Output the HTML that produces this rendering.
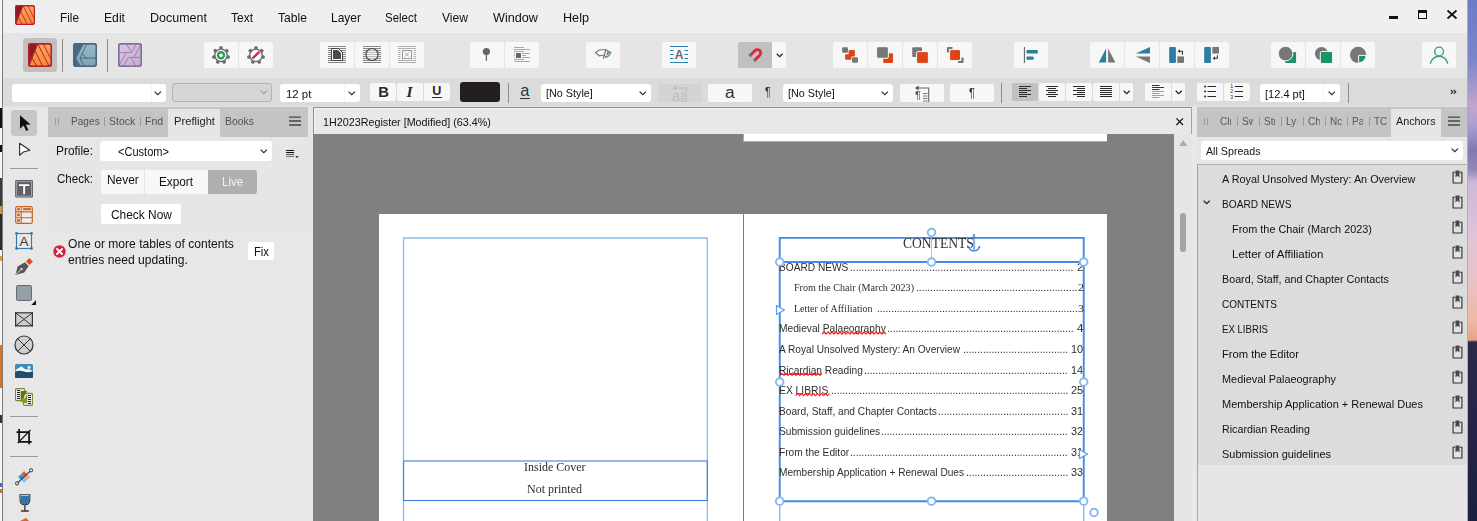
<!DOCTYPE html>
<html lang="en"><head><meta charset="utf-8"><title>1H2023Register - Affinity Publisher</title>
<style>
html,body{margin:0;padding:0;}
body{width:1477px;height:521px;overflow:hidden;background:#e6e6e6;font-family:"Liberation Sans",Arial,sans-serif;}
#app{position:relative;width:1477px;height:521px;overflow:hidden;}
#app div,#app span,#app svg{position:absolute;display:block;}
#app span{white-space:pre;}
</style></head><body><div id="app"><section id="desktop">
</section><section id="backgrounds" aria-label="backgrounds">
<div style="left:1467px;top:0px;width:10px;height:521px;background:linear-gradient(180deg,#6c7cc6 0px,#7a86c8 60px,#a898cc 88px,#c2a4cc 106px,#aaa0d4 125px,#8278b0 150px,#9388b8 170px,#cdb8d8 182px,#e0c4d8 240px,#e8c2c6 280px,#efb8a4 320px,#e6a488 340px,#2c2848 342px,#26264a 400px,#1c1f40 521px);"></div>
<div style="left:0px;top:0px;width:3px;height:521px;background:#f6f6f6;"></div>
<div style="left:0px;top:108px;width:2px;height:20px;background:#111;"></div>
<div style="left:0px;top:145px;width:2px;height:7px;background:#111;"></div>
<div style="left:0px;top:178px;width:2px;height:28px;background:#3a3a3a;"></div>
<div style="left:0px;top:206px;width:2px;height:8px;background:#d9962e;"></div>
<div style="left:0px;top:214px;width:2px;height:36px;background:#2a2a2a;"></div>
<div style="left:0px;top:256px;width:2px;height:5px;background:#e0a030;"></div>
<div style="left:0px;top:345px;width:2px;height:43px;background:#e0701e;"></div>
<div style="left:0px;top:415px;width:2px;height:8px;background:#333;"></div>
<div style="left:0px;top:483px;width:2px;height:4px;background:#3a6fd0;"></div>
<div style="left:0px;top:489px;width:2px;height:4px;background:#e0701e;"></div>
<div style="left:2px;top:0px;width:1px;height:521px;background:#7a7a7a;"></div>
<div style="left:3px;top:0px;width:1464px;height:33px;background:#efefef;"></div>
<div style="left:3px;top:33px;width:1464px;height:45px;background:#e5e5e5;"></div>
<div style="left:3px;top:78px;width:1464px;height:29px;background:#dbdbdb;"></div>
<div style="left:3px;top:107px;width:1464px;height:414px;background:#e6e6e6;"></div>
<div style="left:1466.6px;top:0px;width:1.2000000000000455px;height:521px;background:#aeaeb4;"></div>
</section><section id="menu-bar" aria-label="menu bar">
<svg style="left:15px;top:5px;" width="20" height="20" viewBox="0 0 24 24"><defs><clipPath id="pmc"><rect width="24" height="24" rx="3.200"/></clipPath>
<linearGradient id="pmg" x1="0" y1="0" x2="0" y2="1"><stop offset="0" stop-color="#ffa45c"/><stop offset="1" stop-color="#f6893c"/></linearGradient></defs>
<g clip-path="url(#pmc)"><rect width="24" height="24" fill="#b4202d"/>
<polygon points="0,0 9.800,0 0,20.500" fill="#8c1a25"/>
<polygon points="1.600,22.800 10,1.400 22.800,1.400 22.800,22.800" fill="url(#pmg)"/>
<g stroke="#b4202d" stroke-width="1"><line x1="6.900" y1="7.300" x2="14.400" y2="23"/><line x1="9.800" y1="1" x2="21" y2="23"/><line x1="15.300" y1="1" x2="23.200" y2="16.500"/><line x1="3.900" y1="14.600" x2="8.500" y2="23"/></g>
</g><rect x="0.700" y="0.700" width="22.600" height="22.600" rx="2.700" fill="none" stroke="#b4202d" stroke-width="1.500"/></svg>
<span style="left:59.50px;top:12.00px;font-size:12.2px;line-height:12.2px;color:#111;transform:scaleX(0.9665);transform-origin:0 0;">File</span>
<span style="left:103.50px;top:12.00px;font-size:12.2px;line-height:12.2px;color:#111;transform:scaleX(0.9989);transform-origin:0 0;">Edit</span>
<span style="left:149.50px;top:12.00px;font-size:12.2px;line-height:12.2px;color:#111;transform:scaleX(1.0251);transform-origin:0 0;">Document</span>
<span style="left:230.50px;top:12.00px;font-size:12.2px;line-height:12.2px;color:#111;transform:scaleX(0.9833);transform-origin:0 0;">Text</span>
<span style="left:277.50px;top:12.00px;font-size:12.2px;line-height:12.2px;color:#111;transform:scaleX(0.9943);transform-origin:0 0;">Table</span>
<span style="left:330.50px;top:12.00px;font-size:12.2px;line-height:12.2px;color:#111;transform:scaleX(0.9830);transform-origin:0 0;">Layer</span>
<span style="left:384.50px;top:12.00px;font-size:12.2px;line-height:12.2px;color:#111;transform:scaleX(0.9437);transform-origin:0 0;">Select</span>
<span style="left:441.50px;top:12.00px;font-size:12.2px;line-height:12.2px;color:#111;transform:scaleX(0.9915);transform-origin:0 0;">View</span>
<span style="left:492.50px;top:12.00px;font-size:12.2px;line-height:12.2px;color:#111;transform:scaleX(1.0371);transform-origin:0 0;">Window</span>
<span style="left:562.50px;top:12.00px;font-size:12.2px;line-height:12.2px;color:#111;transform:scaleX(1.0362);transform-origin:0 0;">Help</span>
<div style="left:1389px;top:16px;width:9px;height:3px;background:#111;"></div>
<div style="left:1418px;top:10px;width:9px;height:9px;background:transparent;box-sizing:border-box;border:1px solid #111;border-top:3px solid #111;"></div>
<svg style="left:1446px;top:9px;" width="12" height="11" viewBox="0 0 12 11"><path d="M1.5 1.5 L10.5 9.5 M10.5 1.5 L1.5 9.5" stroke="#111" stroke-width="1.7" fill="none"/></svg>
</section><section id="toolbar" aria-label="toolbar">
<div style="left:23px;top:38px;width:34px;height:34px;background:#c0c0c0;border-radius:3px;"></div>
<svg style="left:28px;top:43px;" width="24" height="24" viewBox="0 0 24 24"><defs><clipPath id="ptc"><rect width="24" height="24" rx="3.200"/></clipPath>
<linearGradient id="ptg" x1="0" y1="0" x2="0" y2="1"><stop offset="0" stop-color="#ffa45c"/><stop offset="1" stop-color="#f6893c"/></linearGradient></defs>
<g clip-path="url(#ptc)"><rect width="24" height="24" fill="#b4202d"/>
<polygon points="0,0 9.800,0 0,20.500" fill="#8c1a25"/>
<polygon points="1.600,22.800 10,1.400 22.800,1.400 22.800,22.800" fill="url(#ptg)"/>
<g stroke="#b4202d" stroke-width="1"><line x1="6.900" y1="7.300" x2="14.400" y2="23"/><line x1="9.800" y1="1" x2="21" y2="23"/><line x1="15.300" y1="1" x2="23.200" y2="16.500"/><line x1="3.900" y1="14.600" x2="8.500" y2="23"/></g>
</g><rect x="0.700" y="0.700" width="22.600" height="22.600" rx="2.700" fill="none" stroke="#b4202d" stroke-width="1.500"/></svg>
<div style="left:62px;top:39px;width:1px;height:32.5px;background:#8a8a8a;"></div>
<svg style="left:73px;top:43px;" width="24" height="24" viewBox="0 0 24 24">
<defs><clipPath id="pc3"><rect width="24" height="24" rx="3.200"/></clipPath>
<linearGradient id="dg" x1="0" y1="0" x2="0" y2="1"><stop offset="0" stop-color="#97b9c7"/><stop offset="1" stop-color="#7ea5b6"/></linearGradient></defs>
<g clip-path="url(#pc3)"><rect width="24" height="24" fill="#4d6680"/>
<polygon points="10.600,1.400 22.800,1.400 22.800,22.800 7.600,22.800 3.200,15.200" fill="url(#dg)"/>
<g stroke="#4d6680" stroke-width="1" fill="none"><path d="M13.900 1 L6.900 15.100 H23"/><path d="M9.200 10.200 L13.400 15.100"/><path d="M6.900 15.100 L11 23"/></g>
</g><rect x="0.700" y="0.700" width="22.600" height="22.600" rx="2.700" fill="none" stroke="#4d6680" stroke-width="1.500"/>
</svg>
<div style="left:107px;top:39px;width:1px;height:32.5px;background:#8a8a8a;"></div>
<svg style="left:118px;top:43px;" width="24" height="24" viewBox="0 0 24 24">
<defs><clipPath id="pc4"><rect width="24" height="24" rx="3.200"/></clipPath>
<linearGradient id="pg" x1="0" y1="0" x2="1" y2="1"><stop offset="0" stop-color="#dcc6e2"/><stop offset="1" stop-color="#c5a8d0"/></linearGradient></defs>
<g clip-path="url(#pc4)"><rect width="24" height="24" fill="#806f96"/>
<rect x="1.400" y="1.400" width="21.400" height="21.400" fill="url(#pg)"/>
<g stroke="#9a84ad" stroke-width="1" fill="none">
<path d="M8.500 1 L13.500 9.600"/><path d="M23 2 L15.800 14.200"/><path d="M1 9.600 L13.500 9.600"/><path d="M8.200 9.600 L1.500 21.500"/><path d="M23 14.400 L10.500 14.400"/><path d="M13 14.400 L17.800 23"/><path d="M10.500 14.400 L5.500 23"/><path d="M13.500 9.600 L18 1.500"/>
</g></g><rect x="0.700" y="0.700" width="22.600" height="22.600" rx="2.700" fill="none" stroke="#806f96" stroke-width="1.500"/>
</svg>
<div style="left:204px;top:42px;width:34px;height:26px;background:#f7f7f7;border-radius:2px;"></div>
<svg style="left:204px;top:42px;" width="34" height="26" viewBox="0 0 34 26"><rect x="15.30" y="4.30" width="3.4" height="3.6" rx="1.1" fill="#6c6c6c" transform="rotate(0.00 17 13.3)"/><rect x="15.30" y="4.30" width="3.4" height="3.6" rx="1.1" fill="#6c6c6c" transform="rotate(51.43 17 13.3)"/><rect x="15.30" y="4.30" width="3.4" height="3.6" rx="1.1" fill="#6c6c6c" transform="rotate(102.86 17 13.3)"/><rect x="15.30" y="4.30" width="3.4" height="3.6" rx="1.1" fill="#6c6c6c" transform="rotate(154.29 17 13.3)"/><rect x="15.30" y="4.30" width="3.4" height="3.6" rx="1.1" fill="#6c6c6c" transform="rotate(205.71 17 13.3)"/><rect x="15.30" y="4.30" width="3.4" height="3.6" rx="1.1" fill="#6c6c6c" transform="rotate(257.14 17 13.3)"/><rect x="15.30" y="4.30" width="3.4" height="3.6" rx="1.1" fill="#6c6c6c" transform="rotate(308.57 17 13.3)"/><circle cx="17" cy="13.3" r="6.2" fill="#fff" stroke="#6c6c6c" stroke-width="1.4"/><circle cx="17" cy="13.3" r="3.05" fill="none" stroke="#22a04b" stroke-width="2.3"/></svg>
<div style="left:239px;top:42px;width:34px;height:26px;background:#f7f7f7;border-radius:2px;"></div>
<svg style="left:239px;top:42px;" width="34" height="26" viewBox="0 0 34 26"><rect x="15.30" y="4.30" width="3.4" height="3.6" rx="1.1" fill="#6c6c6c" transform="rotate(0.00 17 13.3)"/><rect x="15.30" y="4.30" width="3.4" height="3.6" rx="1.1" fill="#6c6c6c" transform="rotate(51.43 17 13.3)"/><rect x="15.30" y="4.30" width="3.4" height="3.6" rx="1.1" fill="#6c6c6c" transform="rotate(102.86 17 13.3)"/><rect x="15.30" y="4.30" width="3.4" height="3.6" rx="1.1" fill="#6c6c6c" transform="rotate(154.29 17 13.3)"/><rect x="15.30" y="4.30" width="3.4" height="3.6" rx="1.1" fill="#6c6c6c" transform="rotate(205.71 17 13.3)"/><rect x="15.30" y="4.30" width="3.4" height="3.6" rx="1.1" fill="#6c6c6c" transform="rotate(257.14 17 13.3)"/><rect x="15.30" y="4.30" width="3.4" height="3.6" rx="1.1" fill="#6c6c6c" transform="rotate(308.57 17 13.3)"/><circle cx="17" cy="13.3" r="6.2" fill="#fff" stroke="#6c6c6c" stroke-width="1.4"/><path d="M13.6 16.3 L20.3 9.9" stroke="#e0203a" stroke-width="2.4"/></svg>
<div style="left:320px;top:42px;width:34px;height:26px;background:#f7f7f7;border-radius:2px;"></div>
<svg style="left:320px;top:42px;" width="34" height="26" viewBox="0 0 34 26"><path d="M8 4.5 H26" stroke="#888" stroke-width="1"/><path d="M8 6.5 H26" stroke="#888" stroke-width="1"/><path d="M8 8.5 H26" stroke="#888" stroke-width="1"/><path d="M8 10.5 H26" stroke="#888" stroke-width="1"/><path d="M8 12.5 H26" stroke="#888" stroke-width="1"/><path d="M8 14.5 H26" stroke="#888" stroke-width="1"/><path d="M8 16.5 H26" stroke="#888" stroke-width="1"/><path d="M8 18.5 H26" stroke="#888" stroke-width="1"/><path d="M8 20.5 H26" stroke="#888" stroke-width="1"/><path d="M11.5 6.5 H18.5 L22.5 10.5 V18.5 H11.5 Z" fill="#fff" stroke="#444" stroke-width="1"/><path d="M13 8 H17.900 L21 11.100 V17 H13 Z" fill="#4a4a4a"/></svg>
<div style="left:355px;top:42px;width:34px;height:26px;background:#f7f7f7;border-radius:2px;"></div>
<svg style="left:355px;top:42px;" width="34" height="26" viewBox="0 0 34 26"><path d="M8 4.5 H26" stroke="#888" stroke-width="1"/><path d="M8 6.5 H26" stroke="#888" stroke-width="1"/><path d="M8 8.5 H26" stroke="#888" stroke-width="1"/><path d="M8 10.5 H26" stroke="#888" stroke-width="1"/><path d="M8 12.5 H26" stroke="#888" stroke-width="1"/><path d="M8 14.5 H26" stroke="#888" stroke-width="1"/><path d="M8 16.5 H26" stroke="#888" stroke-width="1"/><path d="M8 18.5 H26" stroke="#888" stroke-width="1"/><path d="M8 20.5 H26" stroke="#888" stroke-width="1"/><circle cx="17" cy="12.500" r="6" fill="rgba(247,247,247,0.45)" stroke="#4a4a4a" stroke-width="1.200"/></svg>
<div style="left:390px;top:42px;width:34px;height:26px;background:#f7f7f7;border-radius:2px;"></div>
<svg style="left:390px;top:42px;" width="34" height="26" viewBox="0 0 34 26"><path d="M8 4.5 H26" stroke="#b0b0b0" stroke-width="1"/><path d="M8 6.5 H26" stroke="#b0b0b0" stroke-width="1"/><path d="M8 8.5 H10.5 M23.5 8.5 H26" stroke="#b0b0b0" stroke-width="1"/><path d="M8 10.5 H10.5 M23.5 10.5 H26" stroke="#b0b0b0" stroke-width="1"/><path d="M8 12.5 H10.5 M23.5 12.5 H26" stroke="#b0b0b0" stroke-width="1"/><path d="M8 14.5 H10.5 M23.5 14.5 H26" stroke="#b0b0b0" stroke-width="1"/><path d="M8 16.5 H10.5 M23.5 16.5 H26" stroke="#b0b0b0" stroke-width="1"/><path d="M8 18.5 H26" stroke="#b0b0b0" stroke-width="1"/><path d="M8 20.5 H26" stroke="#b0b0b0" stroke-width="1"/><rect x="12.500" y="8.500" width="9" height="8" fill="none" stroke="#999" stroke-width="1"/><path d="M15 10.500 L19 14.500 M19 10.500 L15 14.500" stroke="#a5a5a5" stroke-width="1"/></svg>
<div style="left:470px;top:42px;width:34px;height:26px;background:#f7f7f7;border-radius:2px;"></div>
<svg style="left:470px;top:42px;" width="34" height="26" viewBox="0 0 34 26"><circle cx="16.400" cy="9.500" r="3.600" fill="#666"/><path d="M16.400 12 V18.800" stroke="#666" stroke-width="1.300"/></svg>
<div style="left:505px;top:42px;width:34px;height:26px;background:#f7f7f7;border-radius:2px;"></div>
<svg style="left:505px;top:42px;" width="34" height="26" viewBox="0 0 34 26"><g stroke="#a8a8a8" stroke-width="1"><path d="M9 5.500 H19 M9 7.500 H25 M9 9.500 H19 M9 11.500 H10 M17 11.500 H25 M9 13.500 H10 M17 13.500 H21 M9 15.500 H10 M17 15.500 H25 M9 17.500 H19 M9 19.500 H25"/></g><rect x="11" y="11" width="5" height="5" fill="#666"/></svg>
<div style="left:586px;top:42px;width:34px;height:26px;background:#f7f7f7;border-radius:2px;"></div>
<svg style="left:586px;top:42px;" width="34" height="26" viewBox="0 0 34 26"><path d="M9.500 10.500 Q16 4.500 25 10.500 Q23.500 13.500 20.500 15.500 L18.500 13.800 Q16 12.500 13.500 14 Z" fill="none" stroke="#777" stroke-width="1.100" stroke-linejoin="round"/><path d="M20 7 L17.300 16.800" stroke="#777" stroke-width="1.200"/><path d="M21.300 8.800 L24 10.800 L20.300 14.200 Z" fill="#3f9bd0"/></svg>
<div style="left:662px;top:42px;width:34px;height:26px;background:#f7f7f7;border-radius:2px;"></div>
<svg style="left:662px;top:42px;" width="34" height="26" viewBox="0 0 34 26"><g stroke="#2d7fb0" stroke-width="1.100"><path d="M8 4.500 H26 M8 8.500 H11.500 M22.500 8.500 H26 M8 12.500 H11.500 M22.500 12.500 H26 M8 16.500 H11.500 M22.500 16.500 H26 M8 20.500 H26"/></g></svg>
<span style="left:674.70px;top:49.00px;font-size:12px;line-height:12px;color:#6a6a6a;font-weight:bold;">A</span>
<div style="left:738px;top:42px;width:34px;height:26px;background:#c0c0c0;border-radius:2px;"></div>
<svg style="left:738px;top:42px;" width="34" height="26" viewBox="0 0 34 26"><g transform="translate(19.400 10.900) rotate(45)"><path d="M-3.300 7.800 V0 A3.300 3.300 0 0 1 3.300 0 V7.800" fill="none" stroke="#e4243f" stroke-width="2.900"/><path d="M-3.300 5.600 V8 M3.300 5.600 V8" stroke="#707070" stroke-width="2.900"/></g></svg>
<div style="left:772px;top:42px;width:14px;height:26px;background:#f7f7f7;border-radius:0 2px 2px 0;"></div>
<svg style="left:776.3px;top:52.5px;" width="8" height="5" viewBox="0 0 8 5"><path d="M0.700 0.700 L3.700 3.700 L6.700 0.700" fill="none" stroke="#222" stroke-width="1.250"/></svg>
<div style="left:833px;top:42px;width:34px;height:26px;background:#f7f7f7;border-radius:2px;"></div>
<svg style="left:833px;top:42px;" width="34" height="26" viewBox="0 0 34 26"><rect x="9.100" y="5.200" width="5.900" height="5.500" rx="1" fill="#777"/><rect x="19" y="15.300" width="6" height="5.500" rx="1" fill="#777"/><rect x="15.600" y="8.100" width="6.300" height="6.300" rx="1" fill="#dc4416"/><rect x="12.100" y="12.200" width="6.300" height="5.600" rx="1" fill="#dc4416"/></svg>
<div style="left:868px;top:42px;width:34px;height:26px;background:#f7f7f7;border-radius:2px;"></div>
<svg style="left:868px;top:42px;" width="34" height="26" viewBox="0 0 34 26"><rect x="15.200" y="11.200" width="9.800" height="9.700" rx="1" fill="#dc4416"/><rect x="8.600" y="4.700" width="11.800" height="11.600" rx="1.500" fill="#777" stroke="#f7f7f7" stroke-width="1"/></svg>
<div style="left:903px;top:42px;width:34px;height:26px;background:#f7f7f7;border-radius:2px;"></div>
<svg style="left:903px;top:42px;" width="34" height="26" viewBox="0 0 34 26"><rect x="9.200" y="5.200" width="9.800" height="9.800" rx="1" fill="#777"/><rect x="13.500" y="9.600" width="11.900" height="11.800" rx="1.500" fill="#dc4416" stroke="#f7f7f7" stroke-width="1"/></svg>
<div style="left:938px;top:42px;width:34px;height:26px;background:#f7f7f7;border-radius:2px;"></div>
<svg style="left:938px;top:42px;" width="34" height="26" viewBox="0 0 34 26"><path d="M10 10.500 V6 H14.500 M20 20 H24.500 V15.500" fill="none" stroke="#777" stroke-width="2.200" stroke-linejoin="round"/><rect x="11.600" y="7.600" width="10.900" height="10.900" rx="1.500" fill="#dc4416" stroke="#f7f7f7" stroke-width="1"/></svg>
<div style="left:1014px;top:42px;width:34px;height:26px;background:#f7f7f7;border-radius:2px;"></div>
<svg style="left:1014px;top:42px;" width="34" height="26" viewBox="0 0 34 26"><path d="M10.400 5 V21" stroke="#5a5a5a" stroke-width="1"/><rect x="12.400" y="8.100" width="11.500" height="3.500" rx="1" fill="#2b7ea1"/><rect x="12.400" y="14.400" width="7.300" height="3.400" rx="1" fill="#2b7ea1"/></svg>
<div style="left:1090px;top:42px;width:34px;height:26px;background:#f7f7f7;border-radius:2px;"></div>
<svg style="left:1090px;top:42px;" width="34" height="26" viewBox="0 0 34 26"><polygon points="16.100,6.600 16.100,20.600 8.800,20.600" fill="#2b7ea1"/><polygon points="18.100,6.600 18.100,20.600 25.400,20.600" fill="#777"/></svg>
<div style="left:1125px;top:42px;width:34px;height:26px;background:#f7f7f7;border-radius:2px;"></div>
<svg style="left:1125px;top:42px;" width="34" height="26" viewBox="0 0 34 26"><polygon points="25,5 25,11.600 10.700,11.600" fill="#2b7ea1"/><polygon points="10.700,14.400 25,14.400 25,20.900" fill="#777"/></svg>
<div style="left:1160px;top:42px;width:34px;height:26px;background:#f7f7f7;border-radius:2px;"></div>
<svg style="left:1160px;top:42px;" width="34" height="26" viewBox="0 0 34 26"><rect x="9.200" y="5" width="6.700" height="15.900" rx="1" fill="#2b7ea1"/><rect x="17.300" y="14.400" width="6.700" height="6.500" fill="#777"/><path d="M19.500 9.200 H22.400 V12.800" fill="none" stroke="#333" stroke-width="1.100"/><path d="M17.600 9.200 L20 7.300 V11.100 Z" fill="#333"/></svg>
<div style="left:1195px;top:42px;width:34px;height:26px;background:#f7f7f7;border-radius:2px;"></div>
<svg style="left:1195px;top:42px;" width="34" height="26" viewBox="0 0 34 26"><rect x="9.200" y="5" width="6.700" height="15.900" rx="1" fill="#2b7ea1"/><rect x="17.300" y="5" width="6.700" height="6.600" fill="#777"/><path d="M22.400 13.200 V16.200 H19.500" fill="none" stroke="#333" stroke-width="1.100"/><path d="M17.600 16.200 L20 14.300 V18.100 Z" fill="#333"/></svg>
<div style="left:1271px;top:42px;width:34px;height:26px;background:#f7f7f7;border-radius:2px;"></div>
<svg style="left:1271px;top:42px;" width="34" height="26" viewBox="0 0 34 26"><rect x="14" y="9.900" width="11.100" height="11.100" rx="1" fill="#1a9563"/><circle cx="14.600" cy="11.600" r="7.300" fill="#777" stroke="#f7f7f7" stroke-width="1"/></svg>
<div style="left:1306px;top:42px;width:34px;height:26px;background:#f7f7f7;border-radius:2px;"></div>
<svg style="left:1306px;top:42px;" width="34" height="26" viewBox="0 0 34 26"><circle cx="15.500" cy="11.600" r="6.600" fill="#777"/><rect x="14.300" y="9.400" width="12.300" height="12.100" rx="1.500" fill="#1a9563" stroke="#f7f7f7" stroke-width="1"/></svg>
<div style="left:1341px;top:42px;width:34px;height:26px;background:#f7f7f7;border-radius:2px;"></div>
<svg style="left:1341px;top:42px;" width="34" height="26" viewBox="0 0 34 26"><circle cx="17.100" cy="12.900" r="8.100" fill="#777"/><path d="M17.600 13.400 H25.180 A8.100 8.100 0 0 1 17.600 20.980 Z" fill="#1a9563" stroke="#f7f7f7" stroke-width="1"/><path d="M17.100 21 A8.100 8.100 0 0 0 25.200 12.900" fill="none" stroke="#777" stroke-width="0"/></svg>
<div style="left:1422px;top:42px;width:34px;height:26px;background:#f7f7f7;border-radius:2px;"></div>
<svg style="left:1422px;top:42px;" width="34" height="26" viewBox="0 0 34 26"><circle cx="17.050" cy="9.500" r="4.400" fill="none" stroke="#35a777" stroke-width="1.400"/><path d="M8.300 21.700 Q10.500 14.300 17.050 14.300 Q23.600 14.300 25.800 21.700" fill="none" stroke="#35a777" stroke-width="1.400"/></svg>
</section><section id="context-toolbar" aria-label="context toolbar">
<div style="left:12px;top:83.5px;width:154px;height:18.5px;background:#fff;border-radius:3px;"></div><svg style="left:154px;top:90.5px;" width="8" height="5.5" viewBox="0 0 8 5.5"><path d="M0.600 0.600 L3.800 3.700 L7 0.600" fill="none" stroke="#262626" stroke-width="1.100"/></svg>
<div style="left:151px;top:84px;width:1px;height:18px;background:#f3f3f3;"></div>
<div style="left:172px;top:83px;width:100px;height:19px;background:#d6d6d6;border-radius:3px;box-sizing:border-box;border:1px solid #b4b4b4;"></div><svg style="left:260px;top:90.25px;" width="8" height="5.5" viewBox="0 0 8 5.5"><path d="M0.600 0.600 L3.800 3.700 L7 0.600" fill="none" stroke="#9a9a9a" stroke-width="1.100"/></svg>
<div style="left:280px;top:83.5px;width:80px;height:18.5px;background:#fff;border-radius:3px;"></div><svg style="left:348px;top:90.5px;" width="8" height="5.5" viewBox="0 0 8 5.5"><path d="M0.600 0.600 L3.800 3.700 L7 0.600" fill="none" stroke="#262626" stroke-width="1.100"/></svg>
<div style="left:344px;top:84px;width:1px;height:18px;background:#f3f3f3;"></div>
<span style="left:286.20px;top:89.00px;font-size:11.1px;line-height:11.1px;color:#111;transform:scaleX(1.0288);transform-origin:0 0;">12 pt</span>
<div style="left:370px;top:83px;width:26px;height:18px;background:#f7f7f7;border-radius:2px;"></div>
<span style="left:378.20px;top:85.00px;font-size:14.8px;line-height:14.8px;color:#2a2a2a;font-weight:bold;">B</span>
<div style="left:397px;top:83px;width:26px;height:18px;background:#f7f7f7;border-radius:2px;"></div>
<span style="left:406.50px;top:84.00px;font-size:15.5px;line-height:15.5px;color:#2a2a2a;font-family:'Liberation Serif','Times New Roman',serif;font-style:italic;font-weight:bold;">I</span>
<div style="left:424px;top:83px;width:26px;height:18px;background:#f7f7f7;border-radius:2px;"></div>
<span style="left:432.30px;top:85.00px;font-size:12.6px;line-height:12.6px;color:#2a2a2a;font-weight:bold;">U</span>
<div style="left:432.2px;top:97px;width:9.600000000000023px;height:1px;background:#2a2a2a;"></div>
<div style="left:460px;top:82px;width:40px;height:20px;background:#231f20;border-radius:3px;"></div>
<div style="left:508px;top:82.5px;width:1px;height:20.0px;background:#8c8c8c;"></div>
<span style="left:520.20px;top:82.00px;font-size:16.4px;line-height:16.4px;color:#333;">a</span>
<div style="left:520px;top:97.5px;width:10px;height:1.0px;background:#333;"></div>
<div style="left:541px;top:83.5px;width:110px;height:18.5px;background:#fff;border-radius:3px;"></div><svg style="left:639px;top:90.5px;" width="8" height="5.5" viewBox="0 0 8 5.5"><path d="M0.600 0.600 L3.800 3.700 L7 0.600" fill="none" stroke="#262626" stroke-width="1.100"/></svg>
<span style="left:546.30px;top:88.00px;font-size:11.1px;line-height:11.1px;color:#111;transform:scaleX(0.9747);transform-origin:0 0;">[No Style]</span>
<div style="left:658px;top:84px;width:44px;height:18px;background:#d4d4d4;border-radius:2px;"></div>
<svg style="left:658px;top:84px;" width="44" height="18" viewBox="0 0 44 18"><path d="M17 4 H28.300 V18" fill="none" stroke="#bcbcbc" stroke-width="1.100"/><path d="M14.500 4 L18.100 1.600 V6.400 Z" fill="#bcbcbc"/><path d="M23 9.500 H27 M23 12 H27 M23 14.500 H27 M23 17 H27" stroke="#bcbcbc" stroke-width="1"/></svg>
<span style="left:672.00px;top:88.00px;font-size:15.5px;line-height:15.5px;color:#bdbdbd;transform:scaleX(0.9628);transform-origin:0 0;">a</span>
<div style="left:708px;top:84px;width:44px;height:18px;background:#f7f7f7;border-radius:2px;"></div>
<span style="left:725.00px;top:84.00px;font-size:17.3px;line-height:17.3px;color:#333;">a</span>
<span style="left:764.60px;top:85.00px;font-size:13.3px;line-height:13.3px;color:#333;transform:scaleX(0.7839);transform-origin:0 0;">¶</span>
<div style="left:783px;top:83.5px;width:110px;height:18.5px;background:#fff;border-radius:3px;"></div><svg style="left:881px;top:90.5px;" width="8" height="5.5" viewBox="0 0 8 5.5"><path d="M0.600 0.600 L3.800 3.700 L7 0.600" fill="none" stroke="#262626" stroke-width="1.100"/></svg>
<span style="left:788.30px;top:88.00px;font-size:11.1px;line-height:11.1px;color:#111;transform:scaleX(0.9747);transform-origin:0 0;">[No Style]</span>
<div style="left:900px;top:84px;width:44px;height:18px;background:#f7f7f7;border-radius:2px;"></div>
<svg style="left:900px;top:84px;" width="44" height="18" viewBox="0 0 44 18"><path d="M17.500 4 H28.700 V18" fill="none" stroke="#666" stroke-width="1.100"/><path d="M15 4 L18.600 1.600 V6.400 Z" fill="#555"/><path d="M23 9.500 H27.500 M23 12 H27.500 M23 14.500 H27.500 M23 17 H27.500" stroke="#777" stroke-width="1"/></svg>
<span style="left:915.00px;top:91.00px;font-size:10px;line-height:10px;color:#555;transform:scaleX(1.1171);transform-origin:0 0;">¶</span>
<div style="left:950px;top:84px;width:44px;height:18px;background:#f7f7f7;border-radius:2px;"></div>
<span style="left:969.40px;top:87.00px;font-size:12.6px;line-height:12.6px;color:#333;transform:scaleX(0.8570);transform-origin:0 0;">¶</span>
<div style="left:1001px;top:83px;width:1px;height:19.5px;background:#8c8c8c;"></div>
<div style="left:1012px;top:83px;width:26px;height:18px;background:#c0c0c0;border-radius:2px;"></div>
<svg style="left:1019.2px;top:83px;" width="12" height="18" viewBox="0 0 12 18"><path d="M0 3.50 H12" stroke="#2a2a2a" stroke-width="1"/><path d="M0 5.50 H8" stroke="#2a2a2a" stroke-width="1"/><path d="M0 7.50 H12" stroke="#2a2a2a" stroke-width="1"/><path d="M0 9.50 H8" stroke="#2a2a2a" stroke-width="1"/><path d="M0 11.50 H12" stroke="#2a2a2a" stroke-width="1"/><path d="M0 13.50 H8" stroke="#2a2a2a" stroke-width="1"/></svg>
<div style="left:1039px;top:83px;width:26px;height:18px;background:#f7f7f7;border-radius:2px;"></div>
<svg style="left:1046px;top:83px;" width="12" height="18" viewBox="0 0 12 18"><path d="M0.0 3.50 H12.0" stroke="#2a2a2a" stroke-width="1"/><path d="M2.0 5.50 H10.0" stroke="#2a2a2a" stroke-width="1"/><path d="M0.0 7.50 H12.0" stroke="#2a2a2a" stroke-width="1"/><path d="M2.0 9.50 H10.0" stroke="#2a2a2a" stroke-width="1"/><path d="M0.0 11.50 H12.0" stroke="#2a2a2a" stroke-width="1"/><path d="M2.0 13.50 H10.0" stroke="#2a2a2a" stroke-width="1"/></svg>
<div style="left:1066px;top:83px;width:26px;height:18px;background:#f7f7f7;border-radius:2px;"></div>
<svg style="left:1073px;top:83px;" width="12" height="18" viewBox="0 0 12 18"><path d="M0 3.50 H12" stroke="#2a2a2a" stroke-width="1"/><path d="M4 5.50 H12" stroke="#2a2a2a" stroke-width="1"/><path d="M0 7.50 H12" stroke="#2a2a2a" stroke-width="1"/><path d="M4 9.50 H12" stroke="#2a2a2a" stroke-width="1"/><path d="M0 11.50 H12" stroke="#2a2a2a" stroke-width="1"/><path d="M4 13.50 H12" stroke="#2a2a2a" stroke-width="1"/></svg>
<div style="left:1093px;top:83px;width:26px;height:18px;background:#f7f7f7;border-radius:2px;"></div>
<svg style="left:1100.3px;top:83px;" width="12" height="18" viewBox="0 0 12 18"><path d="M0 3.50 H12" stroke="#2a2a2a" stroke-width="1"/><path d="M0 5.50 H12" stroke="#2a2a2a" stroke-width="1"/><path d="M0 7.50 H12" stroke="#2a2a2a" stroke-width="1"/><path d="M0 9.50 H12" stroke="#2a2a2a" stroke-width="1"/><path d="M0 11.50 H12" stroke="#2a2a2a" stroke-width="1"/><path d="M0 13.50 H12" stroke="#2a2a2a" stroke-width="1"/></svg>
<div style="left:1120px;top:83px;width:13px;height:18px;background:#f7f7f7;border-radius:0 2px 2px 0;"></div>
<svg style="left:1123.3px;top:89.8px;" width="8" height="5" viewBox="0 0 8 5"><path d="M0.700 0.700 L3.700 3.700 L6.700 0.700" fill="none" stroke="#222" stroke-width="1.250"/></svg>
<div style="left:1145px;top:83px;width:26px;height:18px;background:#f7f7f7;border-radius:2px;"></div>
<svg style="left:1152.2px;top:83px;" width="12" height="18" viewBox="0 0 12 18"><path d="M0 2.50 H7.5" stroke="#333" stroke-width="1"/><path d="M0 4.50 H12" stroke="#333" stroke-width="1"/><path d="M0 6.50 H7.5" stroke="#333" stroke-width="1"/><path d="M0 8.50 H12" stroke="#a0a0a0" stroke-width="1"/><path d="M0 10.50 H7.5" stroke="#a0a0a0" stroke-width="1"/><path d="M0 12.50 H12" stroke="#a0a0a0" stroke-width="1"/><path d="M0 14.50 H7.5" stroke="#a0a0a0" stroke-width="1"/></svg>
<div style="left:1172px;top:83px;width:13px;height:18px;background:#f7f7f7;border-radius:0 2px 2px 0;"></div>
<svg style="left:1175.3px;top:89.8px;" width="8" height="5" viewBox="0 0 8 5"><path d="M0.700 0.700 L3.700 3.700 L6.700 0.700" fill="none" stroke="#222" stroke-width="1.250"/></svg>
<div style="left:1197px;top:83px;width:26px;height:18px;background:#f7f7f7;border-radius:2px;"></div>
<svg style="left:1197px;top:83px;" width="26" height="18" viewBox="0 0 26 18"><g fill="#2a2a2a"><circle cx="8" cy="3.500" r="1"/><circle cx="8" cy="8.500" r="1"/><circle cx="8" cy="13.500" r="1"/></g><path d="M10.500 3.500 H19 M10.500 8.500 H19 M10.500 13.500 H19" stroke="#2a2a2a" stroke-width="1.200"/></svg>
<div style="left:1224px;top:83px;width:26px;height:18px;background:#f7f7f7;border-radius:2px;"></div>
<svg style="left:1224px;top:83px;" width="26" height="18" viewBox="0 0 26 18"><path d="M10.800 3.500 H19 M10.800 8.500 H19 M10.800 13.500 H19" stroke="#2a2a2a" stroke-width="1.200"/><g font-size="5.200" font-family="Liberation Sans, sans-serif" fill="#2a2a2a"><text x="6.200" y="5.300">1</text><text x="6.200" y="10.400">2</text><text x="6.200" y="15.500">3</text></g></svg>
<div style="left:1260px;top:83.5px;width:80px;height:18.5px;background:#fff;border-radius:3px;"></div><svg style="left:1328px;top:90.5px;" width="8" height="5.5" viewBox="0 0 8 5.5"><path d="M0.600 0.600 L3.800 3.700 L7 0.600" fill="none" stroke="#262626" stroke-width="1.100"/></svg>
<div style="left:1323.3px;top:84px;width:1.0px;height:18px;background:#f3f3f3;"></div>
<span style="left:1265.00px;top:89.00px;font-size:11.1px;line-height:11.1px;color:#111;transform:scaleX(0.9947);transform-origin:0 0;">[12.4 pt]</span>
<div style="left:1348px;top:82.5px;width:1px;height:20.5px;background:#8c8c8c;"></div>
<svg style="left:1450px;top:89px;" width="8" height="6" viewBox="0 0 8 6"><path d="M0.900 0.800 L2.900 2.800 L0.900 4.800 M3.800 0.800 L5.800 2.800 L3.800 4.800" fill="none" stroke="#222" stroke-width="1.100"/></svg>
<div style="left:3px;top:106px;width:1464px;height:1px;background:#e2e2e2;"></div>
</section><section id="tools-column" aria-label="tools column">
<div style="left:3px;top:107px;width:45px;height:414px;background:#e7e7e7;"></div>
<div style="left:11px;top:110px;width:26px;height:26px;background:#c6c6c6;border-radius:3px;"></div>
<svg style="left:18px;top:114px;" width="14" height="18" viewBox="0 0 14 18"><path d="M2 1.200 V14.800 L5.600 11.600 L8.200 17 L10.400 16 L7.900 10.800 L12.600 10.600 Z" fill="#111"/></svg>
<svg style="left:18px;top:142px;" width="14" height="16" viewBox="0 0 14 16"><path d="M1.600 1.300 V13.300 L5.300 10 L11.800 8.200 Z" fill="#fff" stroke="#2a2a2a" stroke-width="1.100" stroke-linejoin="round"/></svg>
<div style="left:10px;top:167.7px;width:27.6px;height:1.0px;background:#9a9a9a;"></div>
<svg style="left:15px;top:180px;" width="18" height="18" viewBox="0 0 18 18"><rect x="0.200" y="0" width="17.700" height="17.600" rx="1" fill="#55585b"/><rect x="1.600" y="1.400" width="14.900" height="14.800" fill="#5f6164" stroke="#9ea3a8" stroke-width="1"/><path d="M4 5.100 H14.300 M9.150 5.100 V14.200" stroke="#fff" stroke-width="1.900" fill="none"/></svg>
<svg style="left:15px;top:206px;" width="18" height="18" viewBox="0 0 18 18"><rect x=".700" y=".700" width="16.600" height="16.700" rx="1.500" fill="#ececec" stroke="#c8651b" stroke-width="1.200"/><path d="M.700 5.900 H17.300 M.700 11.700 H17.300 M6.200 .700 V17.400" stroke="#c8651b" stroke-width="1.100" fill="none"/><g fill="#c8651b"><rect x="2.100" y="2.100" width="2.700" height="2.300"/><rect x="2.100" y="7.500" width="2.700" height="2.700"/><rect x="2.100" y="13.200" width="2.700" height="2.700"/><rect x="8" y="2.100" width="8" height="2.100"/></g></svg>
<svg style="left:15px;top:232px;" width="18" height="18" viewBox="0 0 18 18"><rect x="1.500" y="1.500" width="15" height="15" fill="none" stroke="#2e7cb0" stroke-width="1.100"/><g fill="#2e7cb0"><circle cx="1.500" cy="1.500" r="1.400"/><circle cx="16.500" cy="1.500" r="1.400"/><circle cx="1.500" cy="16.500" r="1.400"/><circle cx="16.500" cy="16.500" r="1.400"/></g></svg>
<span style="left:19.60px;top:235.00px;font-size:13.4px;line-height:13.4px;color:#3a3a3a;">A</span>
<svg style="left:14px;top:257px;" width="20" height="20" viewBox="0 0 20 20"><path d="M15.200 1 L18.900 4.500 L15.500 7.900 L12 4.500 Z" fill="#e8481c"/><path d="M10.900 5.300 L14.700 9 L10.300 15.600 L1.400 17.900 L3.600 9.400 Z" fill="#575757"/><path d="M1.800 17.500 L7.300 12.300" stroke="#e8e8e8" stroke-width="0.900"/><circle cx="7.600" cy="12.100" r="1.150" fill="#e8e8e8"/></svg>
<div style="left:16px;top:285px;width:16px;height:16px;background:#939fa4;border-radius:1.5px;box-sizing:border-box;border:1px solid #646b70;"></div>
<svg style="left:31px;top:299.5px;" width="6" height="6" viewBox="0 0 6 6"><path d="M5 0.300 V5 H0.300 Z" fill="#111"/></svg>
<svg style="left:15px;top:311px;" width="18" height="16" viewBox="0 0 18 16"><rect x=".600" y="1.800" width="16.800" height="13.100" fill="#cfcfcf" stroke="#333" stroke-width="1.200"/><path d="M.600 1.800 L17.400 14.900 M17.400 1.800 L.600 14.900" stroke="#333" stroke-width="1"/></svg>
<svg style="left:14px;top:335px;" width="20" height="20" viewBox="0 0 20 20"><circle cx="10" cy="10" r="9" fill="#cfcfcf" stroke="#333" stroke-width="1.200"/><path d="M3.700 3.700 L16.300 16.300 M16.300 3.700 L3.700 16.300" stroke="#333" stroke-width="1"/></svg>
<svg style="left:15px;top:364px;" width="18" height="14" viewBox="0 0 18 14"><defs><clipPath id="imc"><rect width="18" height="14" rx="1.500"/></clipPath></defs><g clip-path="url(#imc)"><rect width="18" height="14" fill="#3a8cbd"/><path d="M0 7 L2.500 4.700 L6.400 2.300 L9.500 4.700 L11 5.500 L13.200 5.100 L18 7 V9 H0 Z" fill="#f2f6f9"/><path d="M0 7.600 Q4.500 5.900 9 7.500 Q13.500 9.100 18 6.900 V14 H0 Z" fill="#1f4d6b"/><circle cx="14.100" cy="3.500" r="1.450" fill="#f2f6f9"/></g></svg>
<svg style="left:15px;top:388px;" width="18" height="18" viewBox="0 0 18 18"><rect x=".500" y=".600" width="9.100" height="12" rx="1.200" fill="#ececec" stroke="#7c8c2a" stroke-width="1.100"/><rect x="8.400" y="5.400" width="9.100" height="12" rx="1.200" fill="#ececec" stroke="#7c8c2a" stroke-width="1.100"/><path d="M2 2.5 H5 M2 4.5 H5 M2 6.5 H5 M2 8.5 H5 M2 10.5 H5 " stroke="#222" stroke-width="1"/><path d="M13 7.5 H16 M13 9.5 H16 M13 11.5 H16 M13 13.5 H16 M13 15.5 H16 " stroke="#222" stroke-width="1"/><path d="M5.700 3.100 H12.200 L5.700 14.200 Z" fill="#5d7412"/><path d="M12.200 5.700 V14.900 H6.800 Z" fill="#7f9a1f"/></svg>
<div style="left:10px;top:416px;width:28px;height:1px;background:#9a9a9a;"></div>
<svg style="left:14px;top:427px;" width="20" height="20" viewBox="0 0 20 20"><path d="M5.100 2 V14.800 H17.700 M2.500 5.100 H15.100 V17.200" fill="none" stroke="#111" stroke-width="1.700"/><path d="M3.700 16.200 L16.500 3" stroke="#111" stroke-width="1.200"/></svg>
<div style="left:10px;top:456px;width:28px;height:1px;background:#9a9a9a;"></div>
<svg style="left:14px;top:466px;" width="20" height="20" viewBox="0 0 20 20"><g transform="translate(10.100 11) rotate(45)"><rect x="-4.200" y="-4.200" width="4.200" height="4.200" fill="#d9652a"/><rect x="0" y="-4.200" width="4.200" height="4.200" fill="#eba983"/><rect x="-4.200" y="0" width="4.200" height="4.200" fill="#3a8fd0"/><rect x="0" y="0" width="4.200" height="4.200" fill="#86c4ec"/></g><path d="M3.050 17.400 L17.100 4.300" stroke="#333" stroke-width="1.100"/><circle cx="3.050" cy="17.400" r="1.600" fill="#f0f0f0" stroke="#333" stroke-width="1"/><circle cx="17.100" cy="4.300" r="1.600" fill="#f0f0f0" stroke="#333" stroke-width="1"/></svg>
<svg style="left:15px;top:493px;" width="18" height="20" viewBox="0 0 18 20"><path d="M5 1.700 H14.800 V6.500 Q14.800 11.800 9.900 11.800 Q5 11.800 5 6.500 Z" fill="#f2f2f2" stroke="#333" stroke-width="1.100"/><path d="M5.600 3 H14.200 V6.500 Q14.200 11.200 9.900 11.200 Q5.600 11.200 5.600 6.500 Z" fill="#2f74ad"/><path d="M9.900 12 V17.600 M6 18 H13.800" stroke="#333" stroke-width="1.300"/></svg>
<svg style="left:18px;top:518px;" width="12" height="3" viewBox="0 0 12 3"><path d="M2 3 L8 0 L11 3 Z" fill="#d9652a"/></svg>
</section><section id="left-panel" aria-label="left panel">
<div style="left:48px;top:107px;width:260px;height:29.69999999999999px;background:#c4c4c4;"></div>
<div style="left:168px;top:109px;width:52px;height:27.69999999999999px;background:#e6e6e6;"></div>
<div style="left:55px;top:118.3px;width:1px;height:7.0px;background:#9c9c9c;"></div>
<div style="left:57.8px;top:118.3px;width:1.0px;height:7.0px;background:#9c9c9c;"></div>
<span style="left:71.00px;top:116.00px;font-size:11.1px;line-height:11.1px;color:#525252;transform:scaleX(0.9119);transform-origin:0 0;">Pages</span>
<div style="left:104px;top:117.3px;width:1px;height:9.200000000000003px;background:#9a9a9a;"></div>
<span style="left:109.30px;top:116.00px;font-size:11.1px;line-height:11.1px;color:#525252;transform:scaleX(0.9438);transform-origin:0 0;">Stock</span>
<div style="left:140px;top:117.3px;width:1px;height:9.200000000000003px;background:#9a9a9a;"></div>
<span style="left:145.00px;top:116.00px;font-size:11.1px;line-height:11.1px;color:#525252;transform:scaleX(0.9463);transform-origin:0 0;">Fnd</span>
<span style="left:173.50px;top:116.00px;font-size:11.1px;line-height:11.1px;color:#222;transform:scaleX(1.0069);transform-origin:0 0;">Preflight</span>
<span style="left:224.50px;top:116.00px;font-size:11.1px;line-height:11.1px;color:#525252;transform:scaleX(0.9400);transform-origin:0 0;">Books</span>
<svg style="left:289px;top:116px;" width="12" height="10" viewBox="0 0 12 10"><path d="M0 1.100 H12 M0 5 H12 M0 8.900 H12" stroke="#444" stroke-width="1.450"/></svg>
<span style="left:55.50px;top:145.00px;font-size:12.2px;line-height:12.2px;color:#111;transform:scaleX(0.9744);transform-origin:0 0;">Profile:</span>
<div style="left:100px;top:141.2px;width:172px;height:19.5px;background:#fff;border-radius:3px;"></div><svg style="left:260px;top:148.7px;" width="8" height="5.5" viewBox="0 0 8 5.5"><path d="M0.600 0.600 L3.800 3.700 L7 0.600" fill="none" stroke="#262626" stroke-width="1.100"/></svg>
<span style="left:117.50px;top:146.00px;font-size:12.2px;line-height:12.2px;color:#111;transform:scaleX(0.9061);transform-origin:0 0;">&lt;Custom&gt;</span>
<svg style="left:286px;top:149px;" width="14" height="10" viewBox="0 0 14 10"><path d="M0.100 1.500 H8.100 M0.100 3.500 H8.100" stroke="#111" stroke-width="1.100"/><path d="M0.100 5.500 H8.100" stroke="#555" stroke-width="1.100"/><path d="M0.100 7.500 H8.100" stroke="#7a7a7a" stroke-width="1.100"/><path d="M9.300 7.100 H12.800 L11.050 9.200 Z" fill="#444"/></svg>
<span style="left:56.50px;top:173.00px;font-size:12.2px;line-height:12.2px;color:#111;transform:scaleX(0.9481);transform-origin:0 0;">Check:</span>
<div style="left:101px;top:170px;width:43px;height:24px;background:#f8f8f8;border-radius:2px;"></div>
<span style="left:107.10px;top:174.00px;font-size:12.2px;line-height:12.2px;color:#111;transform:scaleX(0.9772);transform-origin:0 0;">Never</span>
<div style="left:145px;top:170px;width:63px;height:24px;background:#f8f8f8;"></div>
<span style="left:159.20px;top:176.00px;font-size:12.2px;line-height:12.2px;color:#111;transform:scaleX(0.9671);transform-origin:0 0;">Export</span>
<div style="left:208px;top:170px;width:49px;height:24px;background:#afafaf;border-radius:0 3px 3px 0;"></div>
<span style="left:222.10px;top:176.00px;font-size:12.2px;line-height:12.2px;color:#f2f2f2;transform:scaleX(0.9428);transform-origin:0 0;">Live</span>
<div style="left:101px;top:204px;width:80px;height:20px;background:#fff;border-radius:2px;"></div>
<span style="left:110.50px;top:209.00px;font-size:12.2px;line-height:12.2px;color:#111;transform:scaleX(0.9779);transform-origin:0 0;">Check Now</span>
<div style="left:48px;top:232px;width:265px;height:289px;background:#e7e7e7;"></div>
<svg style="left:52.5px;top:244.5px;" width="13" height="13" viewBox="0 0 13 13"><circle cx="6.500" cy="6.500" r="6.200" fill="#d4213d"/><path d="M4 4 L9 9 M9 4 L4 9" stroke="#fff" stroke-width="1.900" stroke-linecap="round"/></svg>
<span style="left:67.50px;top:238.00px;font-size:12.2px;line-height:12.2px;color:#111;transform:scaleX(0.9910);transform-origin:0 0;">One or more tables of contents</span>
<span style="left:67.50px;top:254.00px;font-size:12.2px;line-height:12.2px;color:#111;transform:scaleX(0.9939);transform-origin:0 0;">entries need updating.</span>
<div style="left:248px;top:242px;width:26px;height:18px;background:#fff;border-radius:2px;"></div>
<span style="left:253.50px;top:246.00px;font-size:12.2px;line-height:12.2px;color:#111;transform:scaleX(0.9224);transform-origin:0 0;">Fix</span>
</section><section id="document-area" aria-label="document area">
<div style="left:313px;top:107px;width:879px;height:27.5px;background:#e8e8e8;box-sizing:border-box;border:1px solid #8e8e8e;border-right-color:#a2a2a2;border-bottom-color:#9a9a9a;box-shadow:inset 1px 1px 0 #f5f5f5;"></div>
<span style="left:322.50px;top:117.00px;font-size:11.1px;line-height:11.1px;color:#111;transform:scaleX(0.9690);transform-origin:0 0;">1H2023Register [Modified] (63.4%)</span>
<svg style="left:1175px;top:116.5px;" width="10" height="10" viewBox="0 0 10 10"><path d="M1.400 1.400 L8 8 M8 1.400 L1.400 8" stroke="#111" stroke-width="1.200"/></svg>
<div style="left:313px;top:134px;width:861px;height:387px;background:#808080;"></div>
<div style="left:1174px;top:134px;width:18px;height:387px;background:#e6e6e6;"></div>
<svg style="left:1179.3px;top:139.8px;" width="8.4" height="6.4" viewBox="0 0 8.4 6.4"><path d="M4.200 0 L8.400 6.400 H0 Z" fill="#ababab"/></svg>
<div style="left:1179.8px;top:213px;width:6.600000000000136px;height:38.5px;background:#a3a3a3;border-radius:3.3px;"></div>
<div style="left:742.5px;top:134px;width:364.5px;height:8.300000000000011px;background:#fff;box-sizing:border-box;border-left:1px solid #aaa;border-bottom:1px solid #aaa;"></div>
<div style="left:378.5px;top:214px;width:728.5px;height:307px;background:#fff;"></div>
<div style="left:743px;top:214px;width:1px;height:307px;background:#7c7c7c;"></div>
<svg style="left:0px;top:0px;pointer-events:none;" width="1477" height="521" viewBox="0 0 1477 521"><path d="M403.500 521 V238 H707.300 V521" fill="none" stroke="#86bdef" stroke-width="1.300"/><rect x="403.500" y="461" width="303.800" height="39.500" fill="none" stroke="#3a85df" stroke-width="1.100"/><path d="M779.750 500 V521 M1083.750 500 V521" fill="none" stroke="#86bdef" stroke-width="1.400"/></svg>
<span style="left:523.50px;top:462.00px;font-size:11.8px;line-height:11.8px;color:#2e2e2e;transform:scaleX(1.0144);transform-origin:0 0;font-family:'Liberation Serif','Times New Roman',serif;">Inside Cover</span>
<span style="left:526.50px;top:484.00px;font-size:11.8px;line-height:11.8px;color:#2e2e2e;transform:scaleX(1.0171);transform-origin:0 0;font-family:'Liberation Serif','Times New Roman',serif;">Not printed</span>
<svg style="left:0px;top:0px;pointer-events:none;" width="1477" height="521" viewBox="0 0 1477 521"><path d="M779.750 237.850 H1083.750 V501.300 H779.750 Z M779.750 262 H1083.750" fill="none" stroke="#3f8be8" stroke-width="1.900"/></svg>
<div style="left:930.6px;top:236px;width:1.7999999999999545px;height:26px;background:#a4caf5;"></div>
<span style="left:902.90px;top:237.00px;font-size:13.7px;line-height:13.7px;color:#2e2e2e;transform:scaleX(0.9910);transform-origin:0 0;font-family:'Liberation Serif','Times New Roman',serif;">CONTENTS</span>
<svg style="left:966px;top:233px;" width="16" height="20" viewBox="0 0 16 20"><g fill="none" stroke="#3a7fd6" stroke-width="1.200"><path d="M8 2 V17.500"/><path d="M6 4.500 H10"/><path d="M2.500 14 Q4 18 8 17.800 Q12 18 13.500 14"/></g><circle cx="8" cy="2" r="1" fill="#3a7fd6"/><path d="M1.500 15.200 L2.300 12.800 L4.300 14.600 Z M14.500 15.200 L13.700 12.800 L11.700 14.600 Z" fill="#3a7fd6"/></svg>
<span style="left:778.50px;top:263.00px;font-size:10.15px;line-height:10.15px;color:#2e2e2e;transform:scaleX(1.0019);transform-origin:0 0;">BOARD NEWS</span><span style="left:1076.50px;top:263.00px;font-size:10.15px;line-height:10.15px;color:#2e2e2e;transform:scaleX(1.1515);transform-origin:0 0;">2</span><span style="left:850.22px;top:263.00px;font-size:10.15px;line-height:10.15px;color:#2e2e2e;transform:scaleX(1.0045);transform-origin:0 0;">...............................................................................</span>
<span style="left:793.90px;top:283.00px;font-size:10.15px;line-height:10.15px;color:#2e2e2e;transform:scaleX(0.9971);transform-origin:0 0;font-family:'Liberation Serif','Times New Roman',serif;">From the Chair (March 2023)</span><span style="left:1077.50px;top:283.00px;font-size:10.15px;line-height:10.15px;color:#2e2e2e;transform:scaleX(1.1823);transform-origin:0 0;font-family:'Liberation Serif','Times New Roman',serif;">2</span><span style="left:916.26px;top:283.00px;font-size:10.15px;line-height:10.15px;color:#2e2e2e;transform:scaleX(1.1182);transform-origin:0 0;font-family:'Liberation Serif','Times New Roman',serif;">.........................................................</span>
<span style="left:793.90px;top:304.00px;font-size:10.15px;line-height:10.15px;color:#2e2e2e;transform:scaleX(0.9842);transform-origin:0 0;font-family:'Liberation Serif','Times New Roman',serif;">Letter of Affiliation</span><span style="left:1077.50px;top:304.00px;font-size:10.15px;line-height:10.15px;color:#2e2e2e;transform:scaleX(1.1823);transform-origin:0 0;font-family:'Liberation Serif','Times New Roman',serif;">3</span><span style="left:876.78px;top:304.00px;font-size:10.15px;line-height:10.15px;color:#2e2e2e;transform:scaleX(1.1169);transform-origin:0 0;font-family:'Liberation Serif','Times New Roman',serif;">.......................................................................</span>
<span style="left:778.50px;top:324.00px;font-size:10.15px;line-height:10.15px;color:#2e2e2e;transform:scaleX(1.0087);transform-origin:0 0;">Medieval Palaeography</span><span style="left:1076.50px;top:324.00px;font-size:10.15px;line-height:10.15px;color:#2e2e2e;transform:scaleX(1.1515);transform-origin:0 0;">4</span><span style="left:886.88px;top:324.00px;font-size:10.15px;line-height:10.15px;color:#2e2e2e;transform:scaleX(1.0054);transform-origin:0 0;">..................................................................</span>
<span style="left:778.50px;top:345.00px;font-size:10.15px;line-height:10.15px;color:#2e2e2e;transform:scaleX(1.0018);transform-origin:0 0;">A Royal Unsolved Mystery: An Overview</span><span style="left:1070.90px;top:345.00px;font-size:10.15px;line-height:10.15px;color:#2e2e2e;transform:scaleX(1.0717);transform-origin:0 0;">10</span><span style="left:963.06px;top:345.00px;font-size:10.15px;line-height:10.15px;color:#2e2e2e;transform:scaleX(1.0096);transform-origin:0 0;">.....................................</span>
<span style="left:778.50px;top:366.00px;font-size:10.15px;line-height:10.15px;color:#2e2e2e;transform:scaleX(1.0059);transform-origin:0 0;">Ricardian Reading</span><span style="left:1070.90px;top:366.00px;font-size:10.15px;line-height:10.15px;color:#2e2e2e;transform:scaleX(1.0717);transform-origin:0 0;">14</span><span style="left:864.36px;top:366.00px;font-size:10.15px;line-height:10.15px;color:#2e2e2e;transform:scaleX(1.0049);transform-origin:0 0;">........................................................................</span>
<span style="left:778.50px;top:386.00px;font-size:10.15px;line-height:10.15px;color:#2e2e2e;transform:scaleX(1.0182);transform-origin:0 0;">EX LIBRIS</span><span style="left:1070.90px;top:386.00px;font-size:10.15px;line-height:10.15px;color:#2e2e2e;transform:scaleX(1.0717);transform-origin:0 0;">25</span><span style="left:830.52px;top:386.00px;font-size:10.15px;line-height:10.15px;color:#2e2e2e;transform:scaleX(1.0042);transform-origin:0 0;">....................................................................................</span>
<span style="left:778.50px;top:407.00px;font-size:10.15px;line-height:10.15px;color:#2e2e2e;transform:scaleX(1.0026);transform-origin:0 0;">Board, Staff, and Chapter Contacts</span><span style="left:1070.90px;top:407.00px;font-size:10.15px;line-height:10.15px;color:#2e2e2e;transform:scaleX(1.0717);transform-origin:0 0;">31</span><span style="left:937.68px;top:407.00px;font-size:10.15px;line-height:10.15px;color:#2e2e2e;transform:scaleX(1.0077);transform-origin:0 0;">..............................................</span>
<span style="left:778.50px;top:427.00px;font-size:10.15px;line-height:10.15px;color:#2e2e2e;transform:scaleX(1.0040);transform-origin:0 0;">Submission guidelines</span><span style="left:1070.90px;top:427.00px;font-size:10.15px;line-height:10.15px;color:#2e2e2e;transform:scaleX(1.0717);transform-origin:0 0;">32</span><span style="left:881.28px;top:427.00px;font-size:10.15px;line-height:10.15px;color:#2e2e2e;transform:scaleX(1.0054);transform-origin:0 0;">..................................................................</span>
<span style="left:778.50px;top:448.00px;font-size:10.15px;line-height:10.15px;color:#2e2e2e;transform:scaleX(1.0065);transform-origin:0 0;">From the Editor</span><span style="left:1070.90px;top:448.00px;font-size:10.15px;line-height:10.15px;color:#2e2e2e;transform:scaleX(1.0717);transform-origin:0 0;">31</span><span style="left:850.26px;top:448.00px;font-size:10.15px;line-height:10.15px;color:#2e2e2e;transform:scaleX(1.0046);transform-origin:0 0;">.............................................................................</span>
<span style="left:778.50px;top:468.00px;font-size:10.15px;line-height:10.15px;color:#2e2e2e;transform:scaleX(1.0009);transform-origin:0 0;">Membership Application + Renewal Dues</span><span style="left:1070.90px;top:468.00px;font-size:10.15px;line-height:10.15px;color:#2e2e2e;transform:scaleX(1.0717);transform-origin:0 0;">33</span><span style="left:965.88px;top:468.00px;font-size:10.15px;line-height:10.15px;color:#2e2e2e;transform:scaleX(1.0099);transform-origin:0 0;">....................................</span>
<svg style="left:0px;top:0px;pointer-events:none;" width="1477" height="521" viewBox="0 0 1477 521"><path d="M822 334 L824 332 L826 334 L828 332 L830 334 L832 332 L834 334 L836 332 L838 334 L840 332 L842 334 L844 332 L846 334 L848 332 L850 334 L852 332 L854 334 L856 332 L858 334 L860 332 L862 334 L864 332 L866 334 L868 332 L870 334 L872 332 L874 334 L876 332 L878 334 L880 332 L882 334 L884 332 L886 334" fill="none" stroke="#ee1c25" stroke-width="1.200" stroke-linejoin="round"/><path d="M780 375.3 L782 373.3 L784 375.3 L786 373.3 L788 375.3 L790 373.3 L792 375.3 L794 373.3 L796 375.3 L798 373.3 L800 375.3 L802 373.3 L804 375.3 L806 373.3 L808 375.3 L810 373.3 L812 375.3 L814 373.3 L816 375.3 L818 373.3 L820 375.3 L822 373.3" fill="none" stroke="#ee1c25" stroke-width="1.200" stroke-linejoin="round"/><path d="M795.5 395.6 L797.5 393.6 L799.5 395.6 L801.5 393.6 L803.5 395.6 L805.5 393.6 L807.5 395.6 L809.5 393.6 L811.5 395.6 L813.5 393.6 L815.5 395.6 L817.5 393.6 L819.5 395.6 L821.5 393.6 L823.5 395.6 L825.5 393.6 L827.5 395.6 L829.5 393.6" fill="none" stroke="#ee1c25" stroke-width="1.200" stroke-linejoin="round"/></svg>
<svg style="left:0px;top:0px;pointer-events:none;" width="1477" height="521" viewBox="0 0 1477 521"><circle cx="931.5" cy="232.5" r="3.8" fill="#fff" stroke="#84b7f4" stroke-width="1.900"/><circle cx="779.7" cy="262" r="3.8" fill="#fff" stroke="#84b7f4" stroke-width="1.900"/><circle cx="931.5" cy="262" r="3.8" fill="#fff" stroke="#84b7f4" stroke-width="1.900"/><circle cx="1083.7" cy="262" r="3.8" fill="#fff" stroke="#84b7f4" stroke-width="1.900"/><circle cx="779.7" cy="382" r="3.8" fill="#fff" stroke="#84b7f4" stroke-width="1.900"/><circle cx="1083.7" cy="382" r="3.8" fill="#fff" stroke="#84b7f4" stroke-width="1.900"/><circle cx="779.7" cy="501.2" r="3.8" fill="#fff" stroke="#84b7f4" stroke-width="1.900"/><circle cx="931.5" cy="501.2" r="3.8" fill="#fff" stroke="#84b7f4" stroke-width="1.900"/><circle cx="1083.7" cy="501.2" r="3.8" fill="#fff" stroke="#84b7f4" stroke-width="1.900"/><circle cx="1094" cy="512.5" r="3.8" fill="#fff" stroke="#84b7f4" stroke-width="1.900"/><path d="M776.500 305.500 L784.500 310 L776.500 314.500 Z" fill="#fff" stroke="#5a9cec" stroke-width="1.200" stroke-linejoin="round"/><path d="M1079.500 449.500 L1087.500 454 L1079.500 458.500 Z" fill="#fff" stroke="#5a9cec" stroke-width="1.200" stroke-linejoin="round"/></svg>
</section><section id="right-panel" aria-label="right panel">
<div style="left:1192px;top:107px;width:5px;height:414px;background:#e8e8e8;"></div>
<div style="left:1197px;top:107px;width:270px;height:29.5px;background:#c4c4c4;"></div>
<div style="left:1391.3px;top:109px;width:49.700000000000045px;height:27.5px;background:#e6e6e6;"></div>
<div style="left:1203.8px;top:118.3px;width:1.0px;height:7.0px;background:#9c9c9c;"></div>
<div style="left:1206.6px;top:118.3px;width:1.0px;height:7.0px;background:#9c9c9c;"></div>
<span style="left:1220.00px;top:116.00px;font-size:11.1px;line-height:11.1px;color:#585858;width:13.33px;overflow:hidden;transform:scaleX(0.9);transform-origin:0 0;-webkit-mask-image:linear-gradient(90deg,#000 88%,transparent 100%);mask-image:linear-gradient(90deg,#000 88%,transparent 100%);">Clr</span>
<span style="left:1242.10px;top:116.00px;font-size:11.1px;line-height:11.1px;color:#585858;width:13.44px;overflow:hidden;transform:scaleX(0.9);transform-origin:0 0;-webkit-mask-image:linear-gradient(90deg,#000 88%,transparent 100%);mask-image:linear-gradient(90deg,#000 88%,transparent 100%);">Sw</span>
<div style="left:1237.2px;top:117.3px;width:1.0px;height:9.200000000000003px;background:#9a9a9a;"></div>
<span style="left:1263.90px;top:116.00px;font-size:11.1px;line-height:11.1px;color:#585858;width:13.44px;overflow:hidden;transform:scaleX(0.9);transform-origin:0 0;-webkit-mask-image:linear-gradient(90deg,#000 88%,transparent 100%);mask-image:linear-gradient(90deg,#000 88%,transparent 100%);">Str</span>
<div style="left:1259.0px;top:117.3px;width:1.0px;height:9.200000000000003px;background:#9a9a9a;"></div>
<span style="left:1286.30px;top:116.00px;font-size:11.1px;line-height:11.1px;color:#585858;width:13.44px;overflow:hidden;transform:scaleX(0.9);transform-origin:0 0;-webkit-mask-image:linear-gradient(90deg,#000 88%,transparent 100%);mask-image:linear-gradient(90deg,#000 88%,transparent 100%);">Lyr</span>
<div style="left:1281.3999999999999px;top:117.3px;width:1.0px;height:9.200000000000003px;background:#9a9a9a;"></div>
<span style="left:1307.90px;top:116.00px;font-size:11.1px;line-height:11.1px;color:#585858;width:13.89px;overflow:hidden;transform:scaleX(0.9);transform-origin:0 0;-webkit-mask-image:linear-gradient(90deg,#000 88%,transparent 100%);mask-image:linear-gradient(90deg,#000 88%,transparent 100%);">Ch</span>
<div style="left:1303.0px;top:117.3px;width:1.0px;height:9.200000000000003px;background:#9a9a9a;"></div>
<span style="left:1329.90px;top:116.00px;font-size:11.1px;line-height:11.1px;color:#585858;width:13.67px;overflow:hidden;transform:scaleX(0.9);transform-origin:0 0;-webkit-mask-image:linear-gradient(90deg,#000 88%,transparent 100%);mask-image:linear-gradient(90deg,#000 88%,transparent 100%);">Nc</span>
<div style="left:1325.0px;top:117.3px;width:1.0px;height:9.200000000000003px;background:#9a9a9a;"></div>
<span style="left:1351.70px;top:116.00px;font-size:11.1px;line-height:11.1px;color:#585858;width:13.11px;overflow:hidden;transform:scaleX(0.9);transform-origin:0 0;-webkit-mask-image:linear-gradient(90deg,#000 88%,transparent 100%);mask-image:linear-gradient(90deg,#000 88%,transparent 100%);">Pa</span>
<div style="left:1346.8px;top:117.3px;width:1.0px;height:9.200000000000003px;background:#9a9a9a;"></div>
<span style="left:1373.70px;top:116.00px;font-size:11.1px;line-height:11.1px;color:#585858;transform:scaleX(0.8853);transform-origin:0 0;">TC</span>
<div style="left:1369.0px;top:117.3px;width:1.0px;height:9.200000000000003px;background:#9a9a9a;"></div>
<span style="left:1396.10px;top:116.00px;font-size:11.1px;line-height:11.1px;color:#1a1a1a;transform:scaleX(0.9725);transform-origin:0 0;">Anchors</span>
<svg style="left:1448px;top:116px;" width="12" height="10" viewBox="0 0 12 10"><path d="M0 1.100 H12 M0 5 H12 M0 8.900 H12" stroke="#444" stroke-width="1.450"/></svg>
<div style="left:1200.7px;top:141px;width:262.29999999999995px;height:18.69999999999999px;background:#fff;border-radius:3px;"></div><svg style="left:1451px;top:148.1px;" width="8" height="5.5" viewBox="0 0 8 5.5"><path d="M0.600 0.600 L3.800 3.700 L7 0.600" fill="none" stroke="#262626" stroke-width="1.100"/></svg>
<span style="left:1205.90px;top:146.00px;font-size:11.1px;line-height:11.1px;color:#111;transform:scaleX(0.9619);transform-origin:0 0;">All Spreads</span>
<div style="left:1197px;top:164px;width:270px;height:300.5px;background:#dcdcdc;box-sizing:border-box;border-left:1px solid #a4a4a4;border-top:1px solid #b0b0b0;"></div>
<div style="left:1197px;top:464.5px;width:1px;height:56.5px;background:#a8a8a8;"></div>
<span style="left:1221.50px;top:174.00px;font-size:11.1px;line-height:11.1px;color:#111;transform:scaleX(0.9767);transform-origin:0 0;">A Royal Unsolved Mystery: An Overview</span>
<svg style="left:1451.5px;top:170.4px;" width="11" height="14" viewBox="0 0 11 14"><path d="M3.200 2.200 H1.100 V13 H9.900 V2.200 H7.800" fill="#e2e2e2" stroke="#333" stroke-width="1.150"/><path d="M3.500 0.500 H7.500 V7.400 L5.500 5.700 L3.500 7.400 Z" fill="#484848"/></svg>
<span style="left:1221.50px;top:199.00px;font-size:11.1px;line-height:11.1px;color:#111;transform:scaleX(0.9162);transform-origin:0 0;">BOARD NEWS</span>
<svg style="left:1451.5px;top:195.4px;" width="11" height="14" viewBox="0 0 11 14"><path d="M3.200 2.200 H1.100 V13 H9.900 V2.200 H7.800" fill="#e2e2e2" stroke="#333" stroke-width="1.150"/><path d="M3.500 0.500 H7.500 V7.400 L5.500 5.700 L3.500 7.400 Z" fill="#484848"/></svg>
<span style="left:1231.50px;top:224.00px;font-size:11.1px;line-height:11.1px;color:#111;transform:scaleX(0.9782);transform-origin:0 0;">From the Chair (March 2023)</span>
<svg style="left:1451.5px;top:220.4px;" width="11" height="14" viewBox="0 0 11 14"><path d="M3.200 2.200 H1.100 V13 H9.900 V2.200 H7.800" fill="#e2e2e2" stroke="#333" stroke-width="1.150"/><path d="M3.500 0.500 H7.500 V7.400 L5.500 5.700 L3.500 7.400 Z" fill="#484848"/></svg>
<span style="left:1231.50px;top:249.00px;font-size:11.1px;line-height:11.1px;color:#111;transform:scaleX(1.0382);transform-origin:0 0;">Letter of Affiliation</span>
<svg style="left:1451.5px;top:245.4px;" width="11" height="14" viewBox="0 0 11 14"><path d="M3.200 2.200 H1.100 V13 H9.900 V2.200 H7.800" fill="#e2e2e2" stroke="#333" stroke-width="1.150"/><path d="M3.500 0.500 H7.500 V7.400 L5.500 5.700 L3.500 7.400 Z" fill="#484848"/></svg>
<span style="left:1221.50px;top:274.00px;font-size:11.1px;line-height:11.1px;color:#111;transform:scaleX(0.9677);transform-origin:0 0;">Board, Staff, and Chapter Contacts</span>
<svg style="left:1451.5px;top:270.4px;" width="11" height="14" viewBox="0 0 11 14"><path d="M3.200 2.200 H1.100 V13 H9.900 V2.200 H7.800" fill="#e2e2e2" stroke="#333" stroke-width="1.150"/><path d="M3.500 0.500 H7.500 V7.400 L5.500 5.700 L3.500 7.400 Z" fill="#484848"/></svg>
<span style="left:1221.50px;top:299.00px;font-size:11.1px;line-height:11.1px;color:#111;transform:scaleX(0.9009);transform-origin:0 0;">CONTENTS</span>
<svg style="left:1451.5px;top:295.4px;" width="11" height="14" viewBox="0 0 11 14"><path d="M3.200 2.200 H1.100 V13 H9.900 V2.200 H7.800" fill="#e2e2e2" stroke="#333" stroke-width="1.150"/><path d="M3.500 0.500 H7.500 V7.400 L5.500 5.700 L3.500 7.400 Z" fill="#484848"/></svg>
<span style="left:1221.50px;top:324.00px;font-size:11.1px;line-height:11.1px;color:#111;transform:scaleX(0.8670);transform-origin:0 0;">EX LIBRIS</span>
<svg style="left:1451.5px;top:320.4px;" width="11" height="14" viewBox="0 0 11 14"><path d="M3.200 2.200 H1.100 V13 H9.900 V2.200 H7.800" fill="#e2e2e2" stroke="#333" stroke-width="1.150"/><path d="M3.500 0.500 H7.500 V7.400 L5.500 5.700 L3.500 7.400 Z" fill="#484848"/></svg>
<span style="left:1221.50px;top:349.00px;font-size:11.1px;line-height:11.1px;color:#111;transform:scaleX(1.0066);transform-origin:0 0;">From the Editor</span>
<svg style="left:1451.5px;top:345.4px;" width="11" height="14" viewBox="0 0 11 14"><path d="M3.200 2.200 H1.100 V13 H9.900 V2.200 H7.800" fill="#e2e2e2" stroke="#333" stroke-width="1.150"/><path d="M3.500 0.500 H7.500 V7.400 L5.500 5.700 L3.500 7.400 Z" fill="#484848"/></svg>
<span style="left:1221.50px;top:374.00px;font-size:11.1px;line-height:11.1px;color:#111;transform:scaleX(0.9827);transform-origin:0 0;">Medieval Palaeography</span>
<svg style="left:1451.5px;top:370.4px;" width="11" height="14" viewBox="0 0 11 14"><path d="M3.200 2.200 H1.100 V13 H9.900 V2.200 H7.800" fill="#e2e2e2" stroke="#333" stroke-width="1.150"/><path d="M3.500 0.500 H7.500 V7.400 L5.500 5.700 L3.500 7.400 Z" fill="#484848"/></svg>
<span style="left:1221.50px;top:399.00px;font-size:11.1px;line-height:11.1px;color:#111;transform:scaleX(0.9917);transform-origin:0 0;">Membership Application + Renewal Dues</span>
<svg style="left:1451.5px;top:395.4px;" width="11" height="14" viewBox="0 0 11 14"><path d="M3.200 2.200 H1.100 V13 H9.900 V2.200 H7.800" fill="#e2e2e2" stroke="#333" stroke-width="1.150"/><path d="M3.500 0.500 H7.500 V7.400 L5.500 5.700 L3.500 7.400 Z" fill="#484848"/></svg>
<span style="left:1221.50px;top:424.00px;font-size:11.1px;line-height:11.1px;color:#111;transform:scaleX(0.9636);transform-origin:0 0;">Ricardian Reading</span>
<svg style="left:1451.5px;top:420.4px;" width="11" height="14" viewBox="0 0 11 14"><path d="M3.200 2.200 H1.100 V13 H9.900 V2.200 H7.800" fill="#e2e2e2" stroke="#333" stroke-width="1.150"/><path d="M3.500 0.500 H7.500 V7.400 L5.500 5.700 L3.500 7.400 Z" fill="#484848"/></svg>
<span style="left:1221.50px;top:449.00px;font-size:11.1px;line-height:11.1px;color:#111;transform:scaleX(0.9869);transform-origin:0 0;">Submission guidelines</span>
<svg style="left:1451.5px;top:445.4px;" width="11" height="14" viewBox="0 0 11 14"><path d="M3.200 2.200 H1.100 V13 H9.900 V2.200 H7.800" fill="#e2e2e2" stroke="#333" stroke-width="1.150"/><path d="M3.500 0.500 H7.500 V7.400 L5.500 5.700 L3.500 7.400 Z" fill="#484848"/></svg>
<svg style="left:1203px;top:199.5px;" width="8" height="5" viewBox="0 0 8 5"><path d="M0.700 0.700 L3.700 3.700 L6.700 0.700" fill="none" stroke="#222" stroke-width="1.250"/></svg>
</section></div></body></html>
